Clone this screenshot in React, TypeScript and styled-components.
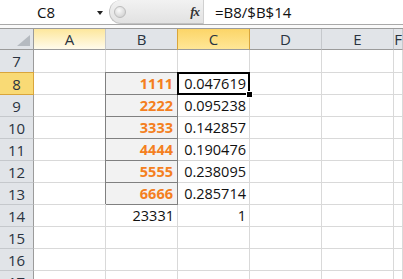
import React, { FC } from 'react';
import styled, { createGlobalStyle, css } from 'styled-components';

const font = `'Open Sans', 'Noto Sans', sans-serif`;

const colors = {
  grid: '#d9d9d9',
  header: '#e1e4e8',
  headerLine: '#c5c8cc',
  headerEdge: '#9b9b9b',
  orange: '#f47f20',
  boxLine: '#808080',
  boxFill: '#f2f2f2',
};

const GlobalStyle = createGlobalStyle`
  body {
    margin: 0;
    background: #fff;
    font-family: ${font};
  }
`;

const Window = styled.div`
  width: 403px;
  height: 279px;
  overflow: hidden;
  background: #fff;
  display: flex;
  flex-direction: column;
`;

const FormulaBar = styled.div`
  display: flex;
  height: 25px;
  flex-shrink: 0;
  box-sizing: border-box;
  border-bottom: 1px solid #a9a9a9;
`;

const NameBox = styled.div`
  width: 109px;
  display: flex;
  align-items: center;
  position: relative;
  font-size: 15px;
  color: #111;
  padding-left: 37px;
  box-sizing: border-box;
`;

const DropArrow = styled.span`
  position: absolute;
  right: 6px;
  top: 11px;
  border-left: 3.5px solid transparent;
  border-right: 3.5px solid transparent;
  border-top: 4px solid #222;
`;

const FxArea = styled.div`
  width: 94px;
  display: flex;
  align-items: center;
  justify-content: space-between;
  padding: 0 4px 0 4px;
  box-sizing: border-box;
  background: linear-gradient(#f2f2f2, #e2e2e2);
  border: 1px solid #c2c2c2;
  border-top: none;
  border-right: none;
  border-radius: 12px 0 0 12px;
`;

const Knob = styled.span`
  width: 10px;
  height: 10px;
  border-radius: 50%;
  background: radial-gradient(circle at 40% 35%, #fafafa, #c8c8c8);
  border: 1px solid #bcbcbc;
`;

const Fx = styled.span`
  font-family: 'Liberation Serif', serif;
  font-style: italic;
  font-weight: bold;
  font-size: 13px;
  color: #333;
  letter-spacing: -1px;
`;

const FormulaInput = styled.div`
  flex: 1;
  display: flex;
  align-items: center;
  padding-left: 11px;
  font-size: 15px;
  color: #111;
  border-left: 1px solid #d0d0d0;
`;

const Strip = styled.div`
  height: 4px;
  flex-shrink: 0;
  box-sizing: border-box;
  border-bottom: 1px solid #9c9c9c;
  background: #fafafa;
`;

const Grid = styled.div`
  display: grid;
  grid-template-columns: 34px repeat(5, 72px) 1fr;
  grid-template-rows: 21px 23px;
  grid-auto-rows: 22px;
  font-size: 14.5px;
`;

type HeadState = 'selected' | 'hover' | undefined;

const headStates = {
  selected: css`
    background: linear-gradient(#fcd568, #ffe797);
    border-right-color: #d9a53b;
    box-shadow: -1px 0 0 #d9a53b;
  `,
  hover: css`
    background: linear-gradient(#fde79c, #fffbec);
  `,
};

const ColHead = styled.div<{ $state?: HeadState }>`
  display: flex;
  align-items: center;
  justify-content: center;
  background: ${colors.header};
  border-right: 1px solid ${colors.headerLine};
  border-bottom: 1px solid ${colors.headerEdge};
  color: #2a3340;
  font-size: 15px;
  ${({ $state }) => $state && headStates[$state]}
`;

const Corner = styled(ColHead)`
  position: relative;
  border-right-color: ${colors.headerEdge};
  &::after {
    content: '';
    position: absolute;
    right: 3px;
    bottom: 3px;
    width: 13px;
    height: 11px;
    background: #b5bac0;
    clip-path: polygon(100% 0, 100% 100%, 0 100%);
  }
`;

const RowHead = styled.div<{ $selected?: boolean }>`
  display: flex;
  align-items: center;
  justify-content: center;
  background: ${colors.header};
  border-right: 1px solid ${colors.headerEdge};
  border-bottom: 1px solid ${colors.headerLine};
  color: #2a3340;
  font-size: 15px;
  ${({ $selected }) =>
    $selected &&
    css`
      background: #f9da75;
      border-right-color: #d9a53b;
      border-bottom-color: #d9a53b;
      box-shadow: 0 -1px 0 #d9a53b;
    `}
`;

const Cell = styled.div<{ $boxed?: boolean; $accent?: boolean }>`
  display: flex;
  align-items: center;
  justify-content: flex-end;
  padding-right: 3px;
  box-sizing: border-box;
  border-right: 1px solid ${colors.grid};
  border-bottom: 1px solid ${colors.grid};
  color: #111;
  white-space: nowrap;
  ${({ $boxed }) =>
    $boxed &&
    css`
      background: ${colors.boxFill};
      border-color: ${colors.boxLine};
      box-shadow: -1px -1px 0 ${colors.boxLine};
      padding-right: 4px;
    `}
  ${({ $accent }) =>
    $accent &&
    css`
      color: ${colors.orange};
      font-weight: 700;
    `}
`;

const ActiveCell = styled(Cell)`
  position: relative;
`;

const Selection = styled.span`
  position: absolute;
  left: -1px;
  top: -1px;
  right: -1px;
  bottom: -1px;
  border: 2px solid #000;
  pointer-events: none;
`;

const FillHandle = styled.span`
  position: absolute;
  right: -4px;
  bottom: -4px;
  width: 5px;
  height: 5px;
  background: #000;
  border: 1px solid #fff;
`;

const columns = ['A', 'B', 'C', 'D', 'E', 'F'];

type RowData = { n: number; b?: string; c?: string; boxed?: boolean };

const rows: RowData[] = [
  { n: 7 },
  { n: 8, b: '1111', c: '0.047619', boxed: true },
  { n: 9, b: '2222', c: '0.095238', boxed: true },
  { n: 10, b: '3333', c: '0.142857', boxed: true },
  { n: 11, b: '4444', c: '0.190476', boxed: true },
  { n: 12, b: '5555', c: '0.238095', boxed: true },
  { n: 13, b: '6666', c: '0.285714', boxed: true },
  { n: 14, b: '23331', c: '1' },
  { n: 15 },
  { n: 16 },
  { n: 17 },
];

const ACTIVE_ROW = 8;

const App: FC = (): JSX.Element => {
  return (
    <Window>
      <GlobalStyle />
      <FormulaBar>
        <NameBox>
          C8
          <DropArrow />
        </NameBox>
        <FxArea>
          <Knob />
          <Fx>fx</Fx>
        </FxArea>
        <FormulaInput>=B8/$B$14</FormulaInput>
      </FormulaBar>
      <Strip />
      <Grid>
        <Corner />
        {columns.map((col) => (
          <ColHead key={col} $state={col === 'C' ? 'selected' : col === 'A' ? 'hover' : undefined}>
            {col}
          </ColHead>
        ))}
        {rows.map((row) => (
          <React.Fragment key={row.n}>
            <RowHead $selected={row.n === ACTIVE_ROW}>{row.n}</RowHead>
            <Cell />
            <Cell $boxed={row.boxed} $accent={row.boxed}>
              {row.b}
            </Cell>
            {row.n === ACTIVE_ROW ? (
              <ActiveCell>
                {row.c}
                <Selection />
                <FillHandle />
              </ActiveCell>
            ) : (
              <Cell>{row.c}</Cell>
            )}
            <Cell />
            <Cell />
            <Cell />
          </React.Fragment>
        ))}
      </Grid>
    </Window>
  );
};

export default App;
